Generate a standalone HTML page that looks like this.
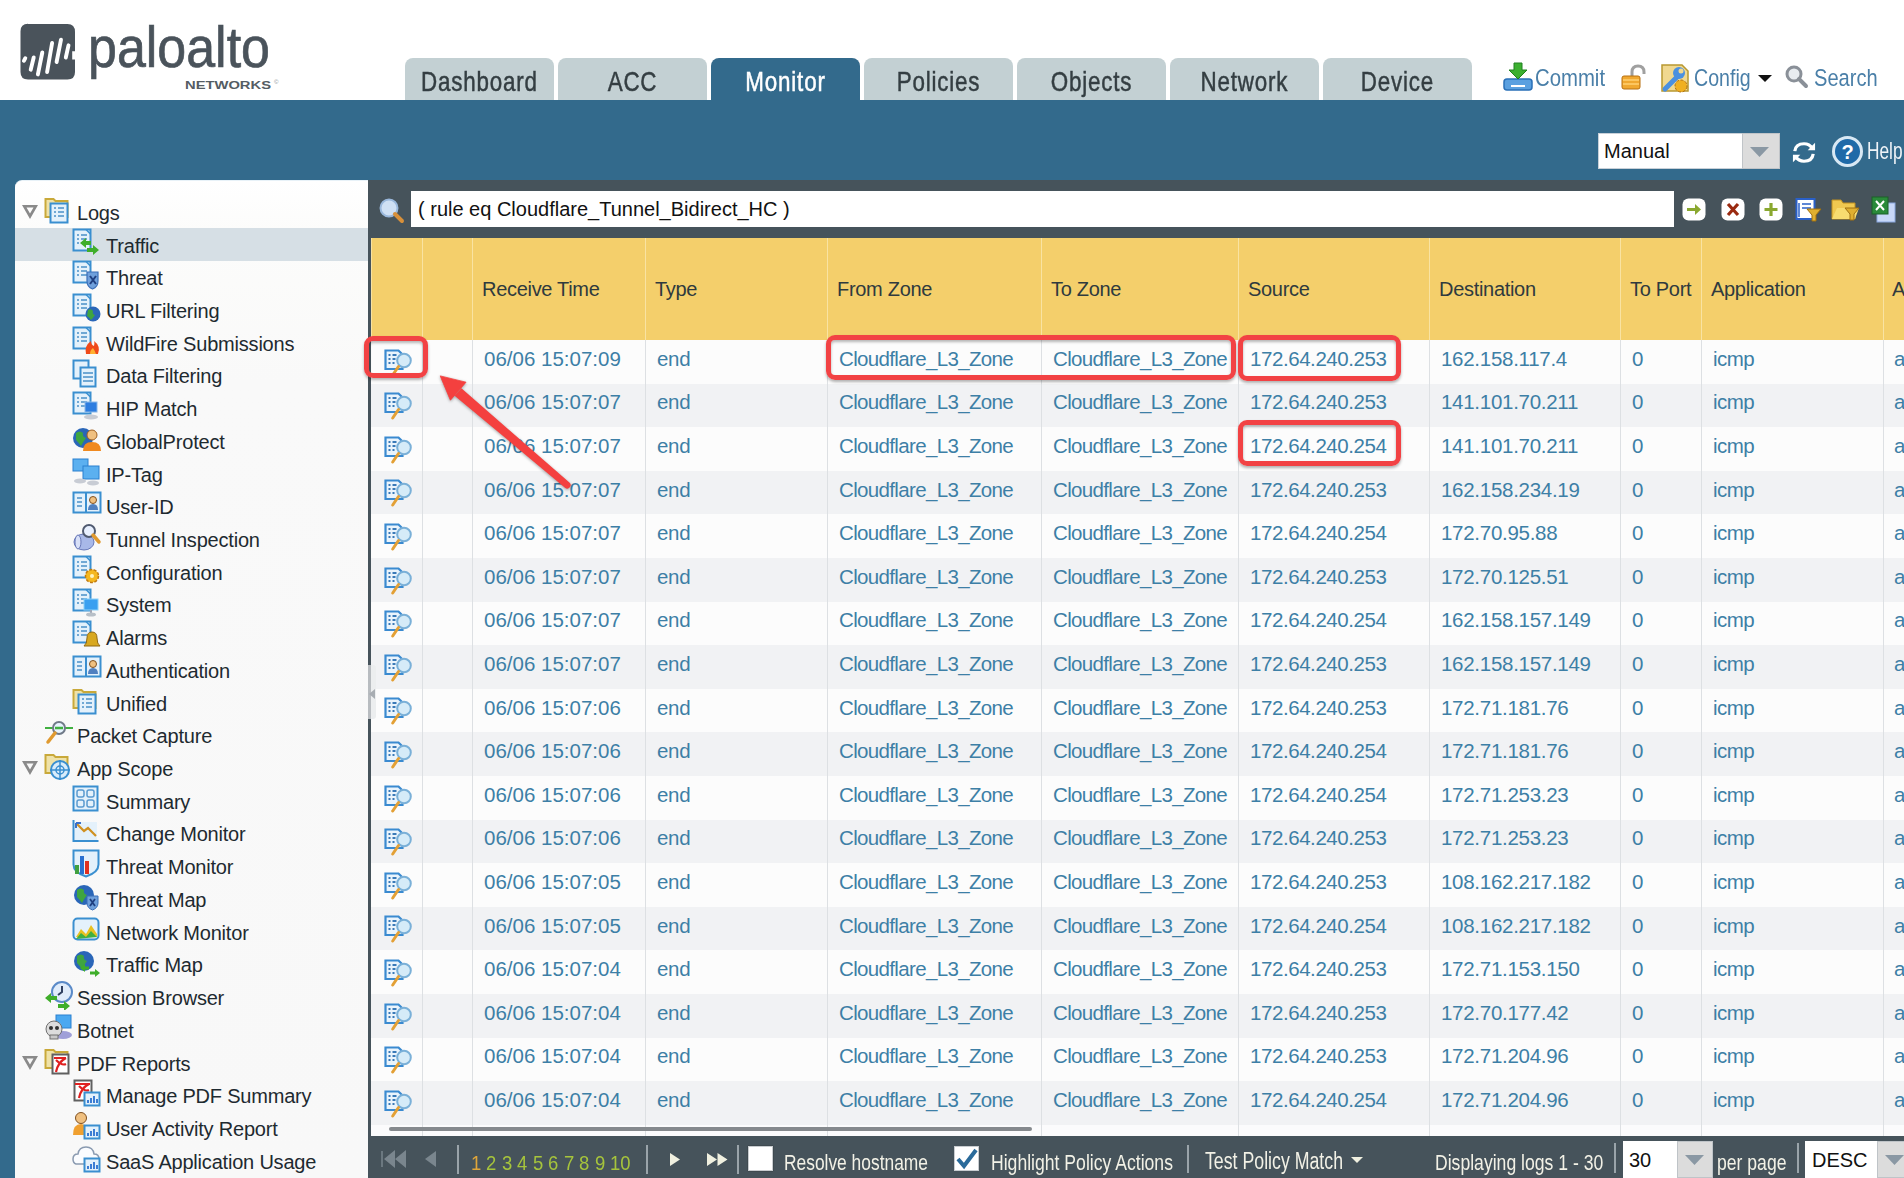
<!DOCTYPE html><html><head><meta charset="utf-8"><style>
*{margin:0;padding:0;box-sizing:border-box}
html,body{width:1904px;height:1178px;overflow:hidden;background:#fff;font-family:"Liberation Sans",sans-serif}
.abs{position:absolute}
.tab{position:absolute;top:58px;height:42px;width:149px;background:#c3d0d3;border-radius:8px 8px 0 0;}
.tab span{position:absolute;left:0;right:0;top:7.5px;text-align:center;font-size:28px;color:#343e42;transform:scaleX(0.8);letter-spacing:1px;white-space:nowrap;line-height:32px;-webkit-text-stroke:0.5px #343e42}
.tab.on span{-webkit-text-stroke:0.5px #fff}
.tab.on{background:#336a8c}
.tab.on span{color:#fff}
.cond{display:inline-block;transform-origin:0 50%;white-space:nowrap}
.tree{position:absolute;left:0;height:33px;width:353px}
.tree .t{position:absolute;top:0.8px;font-size:20px;line-height:33px;color:#1e2a30;white-space:nowrap;letter-spacing:-0.2px}
.tree svg{position:absolute;top:-1px}
.row{position:absolute;left:371px;width:1533px;height:44px}
.cell{position:absolute;font-size:20.5px;color:#3d7fa6;white-space:nowrap;letter-spacing:-0.35px}
.hd{position:absolute;top:278px;font-size:20px;color:#2f3a3e;white-space:nowrap;letter-spacing:-0.3px}
.sep{position:absolute;width:1px}
.redbox{position:absolute;border:5.5px solid #f24244;border-radius:9px;box-shadow:0 2px 3px rgba(0,0,0,.3), inset 0 2px 3px rgba(0,0,0,.28)}
.ft{position:absolute;color:#f2f1e6;font-size:22px;white-space:nowrap;transform-origin:0 0;line-height:26px;margin-top:2px}
</style></head><body>

<div class="abs" style="left:0;top:0;width:1904px;height:100px;background:#fff"></div>
<svg class="abs" style="left:18px;top:20px" width="270" height="75" viewBox="0 0 270 75">
<path d="M10 4 h39.5 q7.5 0 7.5 8 v19.3 h-2.8 v8.3 h2.8 v12.4 q0 7.5 -7.5 7.5 h-39.5 q-7.5 0 -7.5-7.5 v-40.7 q0-7.5 7.5-7.5z" fill="#4a535b"/>
<g stroke="#fff" stroke-linecap="round" fill="none" stroke-width="3.9">
<path d="M5.9 40.8 l1.4 -2.6"/>
<path d="M12.7 49.7 l3 -12.2"/>
<path d="M19.9 54.4 l4.4 -21.9"/>
<path d="M29.1 52 l5 -29"/>
<path d="M38.6 42 l4.4 -22.3"/>
<path d="M47.8 37.5 l2.7 -12.2"/>
</g>
<text x="70" y="47.2" font-family="Liberation Sans" font-size="58" fill="#4a535b" stroke="#4a535b" stroke-width="0.7" textLength="182" lengthAdjust="spacingAndGlyphs">paloalto</text>
<text x="167" y="68.5" font-family="Liberation Sans" font-weight="bold" font-size="11.5" fill="#545c63" textLength="86" lengthAdjust="spacingAndGlyphs">NETWORKS</text>
<text x="256" y="64" font-family="Liberation Sans" font-size="6" fill="#8a9096">&#169;</text>
</svg>
<div class="tab" style="left:405px"><span>Dashboard</span></div>
<div class="tab" style="left:558px"><span>ACC</span></div>
<div class="tab on" style="left:711px"><span>Monitor</span></div>
<div class="tab" style="left:864px"><span>Policies</span></div>
<div class="tab" style="left:1017px"><span>Objects</span></div>
<div class="tab" style="left:1170px"><span>Network</span></div>
<div class="tab" style="left:1323px"><span>Device</span></div>
<svg class="abs" style="left:1503px;top:62px" width="30" height="30" viewBox="0 0 30 30">
<path d="M4 17 h22 q3 0 3 3 v5 q0 3 -3 3 h-22 q-3 0 -3-3 v-5 q0-3 3-3z" fill="#5aa0e0" stroke="#2a70b8" stroke-width="1.5"/>
<path d="M8 24 h14" stroke="#fff" stroke-width="2"/>
<path d="M11 1 h8 v7 h5 l-9 9 l-9-9 h5z" fill="#3cb030" stroke="#208020"/>
</svg>
<div class="abs" style="left:1535px;top:64px;font-size:24.5px;color:#4a7fa8;line-height:28px"><span class="cond" style="transform:scaleX(0.83)">Commit</span></div>
<svg class="abs" style="left:1620px;top:64px" width="28" height="28" viewBox="0 0 28 28">
<path d="M12 12 v-4 q0-6 6-6 q6 0 6 6 v2" fill="none" stroke="#a0a0a0" stroke-width="3"/>
<rect x="2" y="12" width="18" height="13" rx="2" fill="#f0a830" stroke="#b87010"/>
<path d="M3 16 h16 M3 20 h16" stroke="#ffd070" stroke-width="1.5"/>
</svg>
<svg class="abs" style="left:1659px;top:63px" width="32" height="30" viewBox="0 0 32 30">
<path d="M3 2 h20 l6 6 v20 h-26z" fill="#f0d890" stroke="#b89830" stroke-width="1.5"/>
<path d="M6 26 l12-12" stroke="#4a90e0" stroke-width="5" stroke-linecap="round"/>
<circle cx="20" cy="10" r="6" fill="#4a90e0"/><circle cx="22" cy="8" r="2.5" fill="#f0d890"/>
<circle cx="22" cy="23" r="6" fill="#f0b020" stroke="#b07010" stroke-dasharray="3 1.5"/>
</svg>
<div class="abs" style="left:1694px;top:64px;font-size:24.5px;color:#4a7fa8;line-height:28px"><span class="cond" style="transform:scaleX(0.8)">Config</span></div>
<svg class="abs" style="left:1758px;top:75px" width="15" height="8"><path d="M0 0 h14 l-7 7z" fill="#111"/></svg>
<svg class="abs" style="left:1785px;top:65px" width="24" height="24" viewBox="0 0 24 24">
<circle cx="9" cy="9" r="7" fill="#e8ecf0" stroke="#8a9098" stroke-width="3"/>
<path d="M14 14 l7 7" stroke="#8a9098" stroke-width="4" stroke-linecap="round"/>
</svg>
<div class="abs" style="left:1814px;top:64px;font-size:24.5px;color:#4a7fa8;line-height:28px"><span class="cond" style="transform:scaleX(0.82)">Search</span></div>
<div class="abs" style="left:0;top:100px;width:1904px;height:1078px;background:#336a8c"></div>
<div class="abs" style="left:1598px;top:133px;width:145px;height:36px;background:#fff;border:1px solid #c8d0d8"></div>
<div class="abs" style="left:1604px;top:137px;font-size:20px;line-height:28px;color:#111">Manual</div>
<div class="abs" style="left:1742px;top:133px;width:38px;height:36px;background:#dcdcdc;border:1px solid #c0c4c8"></div>
<svg class="abs" style="left:1750px;top:147px" width="20" height="11"><path d="M0 0 h19 l-9.5 10z" fill="#8a98a4"/></svg>
<svg class="abs" style="left:1791px;top:141px" width="26" height="23" viewBox="0 0 28 25">
<path d="M4 11 q1-8 10-8 q6 0 9 5" fill="none" stroke="#fff" stroke-width="3.5"/>
<path d="M26 2 v8 h-8z" fill="#fff"/>
<path d="M24 14 q-1 8 -10 8 q-6 0 -9-5" fill="none" stroke="#fff" stroke-width="3.5"/>
<path d="M2 23 v-8 h8z" fill="#fff"/>
</svg>
<svg class="abs" style="left:1831px;top:135px" width="34" height="33" viewBox="0 0 34 33">
<circle cx="16.5" cy="16.5" r="14" fill="#1f6aa8" stroke="#d8e8f4" stroke-width="3"/>
<text x="16.5" y="24" text-anchor="middle" font-family="Liberation Sans" font-weight="bold" font-size="20" fill="#fff">?</text>
</svg>
<div class="abs" style="left:1867px;top:137px;font-size:24px;line-height:28px;color:#f0f4f8"><span class="cond" style="transform:scaleX(0.72)">Help</span></div>
<div class="abs" style="left:15px;top:180px;width:353px;height:998px;background:linear-gradient(#ffffff 0px,#fcfcfb 50px,#f9f9f9 200px,#f8f8f8 100%);border-radius:7px 0 0 0;border-top:1px solid #e8f2f8"></div>
<div class="abs" style="left:15px;top:228px;width:353px;height:33px;background:#d6dfe5"></div>
<div class="tree" style="top:196.00px">
<svg class="abs" style="left:22px;top:9px" width="17" height="15"><path d="M0 0 h16 l-8 14z M4.5 2.5 h7 l-3.5 6z" fill="#8a8a8a" fill-rule="evenodd"/></svg>
<div style="position:absolute;left:44px;top:0"><svg width="30" height="30" viewBox="0 0 30 30"><path d="M1.5 4 h8 l2 2 h12 v16 h-22z" fill="#efe2a8" stroke="#c9a93a" stroke-width="2"/><rect x="6.5" y="8.5" width="17" height="19" fill="#e4f1fb" stroke="#3a8fd0" stroke-width="2"/><path d="M10 13h2M14 13h6M10 17h2M14 17h6M10 21h2M14 21h6" stroke="#4a90c8" stroke-width="1.6"/></svg></div>
<div class="t" style="left:77px">Logs</div>
</div>
<div class="tree" style="top:228.72px">
<div style="position:absolute;left:72px;top:0"><svg width="30" height="30" viewBox="0 0 30 30"><rect x="1.5" y="1.5" width="17" height="21" fill="#e4f1fb" stroke="#3a8fd0" stroke-width="2"/><path d="M14 1.5 L18.5 6" stroke="#3a8fd0" stroke-width="1.5"/><path d="M5 7h2M9 7h6M5 11h2M9 11h6M5 15h2M9 15h6" stroke="#4a90c8" stroke-width="1.6"/><path d="M8 15 l6-5 v3 h5 v4 h-5 v3z" fill="#3fae2a"/><path d="M27 22 l-6-5 v3 h-6 v4 h6 v3z" fill="#3fae2a"/></svg></div>
<div class="t" style="left:106px">Traffic</div>
</div>
<div class="tree" style="top:261.44px">
<div style="position:absolute;left:72px;top:0"><svg width="30" height="30" viewBox="0 0 30 30"><rect x="1.5" y="1.5" width="17" height="21" fill="#e4f1fb" stroke="#3a8fd0" stroke-width="2"/><path d="M14 1.5 L18.5 6" stroke="#3a8fd0" stroke-width="1.5"/><path d="M5 7h2M9 7h6M5 11h2M9 11h6M5 15h2M9 15h6" stroke="#4a90c8" stroke-width="1.6"/><path d="M15 12 h11 v9 q0 6 -5.5 8 q-5.5-2 -5.5-8z" fill="#6fa0dc" stroke="#3b6fb8" stroke-width="1.2"/><path d="M18 16 l6 8 M24 16 l-6 8" stroke="#1f3f80" stroke-width="2"/></svg></div>
<div class="t" style="left:106px">Threat</div>
</div>
<div class="tree" style="top:294.16px">
<div style="position:absolute;left:72px;top:0"><svg width="30" height="30" viewBox="0 0 30 30"><rect x="1.5" y="1.5" width="17" height="21" fill="#e4f1fb" stroke="#3a8fd0" stroke-width="2"/><path d="M14 1.5 L18.5 6" stroke="#3a8fd0" stroke-width="1.5"/><path d="M5 7h2M9 7h6M5 11h2M9 11h6M5 15h2M9 15h6" stroke="#4a90c8" stroke-width="1.6"/><circle cx="21" cy="21" r="7.5" fill="#2a66b8"/><path d="M16 17 q3 -2 5 1 q-1 3 2 4 q-2 3 -4 5 q-2-3-4-4z" fill="#3fa540"/></svg></div>
<div class="t" style="left:106px">URL Filtering</div>
</div>
<div class="tree" style="top:326.88px">
<div style="position:absolute;left:72px;top:0"><svg width="30" height="30" viewBox="0 0 30 30"><rect x="1.5" y="1.5" width="17" height="21" fill="#e4f1fb" stroke="#3a8fd0" stroke-width="2"/><path d="M14 1.5 L18.5 6" stroke="#3a8fd0" stroke-width="1.5"/><path d="M5 7h2M9 7h6M5 11h2M9 11h6M5 15h2M9 15h6" stroke="#4a90c8" stroke-width="1.6"/><path d="M14 28 q-2-8 5-13 q0 4 3 5 q1-3 0-5 q7 5 4 13z" fill="#f04a1a"/><path d="M18 28 q0-4 3-6 q2 3 3 6z" fill="#ffb030"/></svg></div>
<div class="t" style="left:106px">WildFire Submissions</div>
</div>
<div class="tree" style="top:359.60px">
<div style="position:absolute;left:72px;top:0"><svg width="30" height="30" viewBox="0 0 30 30"><rect x="1.5" y="1.5" width="15" height="18" fill="#e4f1fb" stroke="#3a8fd0" stroke-width="2"/><rect x="8.5" y="8.5" width="15" height="19" fill="#e4f1fb" stroke="#3a8fd0" stroke-width="2"/><path d="M11 14h10M11 18h10M11 22h10" stroke="#4a90c8" stroke-width="1.6"/></svg></div>
<div class="t" style="left:106px">Data Filtering</div>
</div>
<div class="tree" style="top:392.32px">
<div style="position:absolute;left:72px;top:0"><svg width="30" height="30" viewBox="0 0 30 30"><rect x="1.5" y="1.5" width="17" height="21" fill="#e4f1fb" stroke="#3a8fd0" stroke-width="2"/><path d="M14 1.5 L18.5 6" stroke="#3a8fd0" stroke-width="1.5"/><path d="M5 7h2M9 7h6M5 11h2M9 11h6M5 15h2M9 15h6" stroke="#4a90c8" stroke-width="1.6"/><rect x="13" y="11" width="12" height="10" fill="#2d7de0" stroke="#8ab8e8"/><ellipse cx="19" cy="26" rx="7" ry="2.5" fill="#c8ccd4"/></svg></div>
<div class="t" style="left:106px">HIP Match</div>
</div>
<div class="tree" style="top:425.04px">
<div style="position:absolute;left:72px;top:0"><svg width="30" height="30" viewBox="0 0 30 30"><circle cx="11" cy="14" r="10" fill="#2a66b8"/><path d="M4 9 q4-3 7 0 q-1 4 3 5 q-3 4-5 8 q-3-4-5-6z" fill="#3fa540"/><circle cx="20" cy="11" r="5" fill="#f0c080" stroke="#a06020"/><path d="M11 27 q0-9 9-9 q9 0 9 9z" fill="#f08a20"/></svg></div>
<div class="t" style="left:106px">GlobalProtect</div>
</div>
<div class="tree" style="top:457.76px">
<div style="position:absolute;left:72px;top:0"><svg width="30" height="30" viewBox="0 0 30 30"><rect x="1" y="2" width="15" height="12" fill="#5bb0f0" stroke="#2a80d0"/><rect x="11" y="9" width="16" height="13" fill="#5bb0f0" stroke="#2a80d0"/><ellipse cx="8" cy="24" rx="6" ry="2.5" fill="#c8ccd4"/><ellipse cx="21" cy="26" rx="6" ry="2.5" fill="#c8ccd4"/></svg></div>
<div class="t" style="left:106px">IP-Tag</div>
</div>
<div class="tree" style="top:490.48px">
<div style="position:absolute;left:72px;top:0"><svg width="30" height="30" viewBox="0 0 30 30"><rect x="1.5" y="3.5" width="27" height="20" fill="#e4f1fb" stroke="#3a8fd0" stroke-width="2"/><path d="M14 3.5 v20" stroke="#3a8fd0" stroke-width="2"/><path d="M5 9h5M5 13h5M5 17h5" stroke="#4a90c8" stroke-width="1.5"/><circle cx="21" cy="11" r="3.5" fill="#f0c080" stroke="#805020"/><path d="M16 21 q0-6 5-6 q5 0 5 6z" fill="#5080c0"/></svg></div>
<div class="t" style="left:106px">User-ID</div>
</div>
<div class="tree" style="top:523.20px">
<div style="position:absolute;left:72px;top:0"><svg width="30" height="30" viewBox="0 0 30 30"><ellipse cx="12" cy="20" rx="10" ry="8" fill="#a8b8e8" stroke="#6878b8"/><ellipse cx="6" cy="20" rx="3" ry="7" fill="#d8e0f8" stroke="#6878b8"/><circle cx="17" cy="9" r="6" fill="#e8f0ff" stroke="#505a70" stroke-width="2"/><path d="M21 13 l6 7" stroke="#e09a30" stroke-width="3.5" stroke-linecap="round"/></svg></div>
<div class="t" style="left:106px">Tunnel Inspection</div>
</div>
<div class="tree" style="top:555.92px">
<div style="position:absolute;left:72px;top:0"><svg width="30" height="30" viewBox="0 0 30 30"><rect x="1.5" y="1.5" width="17" height="21" fill="#e4f1fb" stroke="#3a8fd0" stroke-width="2"/><path d="M14 1.5 L18.5 6" stroke="#3a8fd0" stroke-width="1.5"/><path d="M5 7h2M9 7h6M5 11h2M9 11h6M5 15h2M9 15h6" stroke="#4a90c8" stroke-width="1.6"/><circle cx="20" cy="21" r="6.5" fill="#f5b820" stroke="#c07a10" stroke-width="1.5" stroke-dasharray="3 1.5"/><circle cx="20" cy="21" r="2" fill="#fff4c0"/></svg></div>
<div class="t" style="left:106px">Configuration</div>
</div>
<div class="tree" style="top:588.64px">
<div style="position:absolute;left:72px;top:0"><svg width="30" height="30" viewBox="0 0 30 30"><rect x="1.5" y="1.5" width="17" height="21" fill="#e4f1fb" stroke="#3a8fd0" stroke-width="2"/><path d="M14 1.5 L18.5 6" stroke="#3a8fd0" stroke-width="1.5"/><path d="M5 7h2M9 7h6M5 11h2M9 11h6M5 15h2M9 15h6" stroke="#4a90c8" stroke-width="1.6"/><rect x="12" y="11" width="14" height="11" fill="#3aa0f0" stroke="#8ad0f8"/><path d="M19 22 v3" stroke="#a0a8b8" stroke-width="2"/><ellipse cx="19" cy="26.5" rx="5" ry="2" fill="#b8c0c8"/></svg></div>
<div class="t" style="left:106px">System</div>
</div>
<div class="tree" style="top:621.36px">
<div style="position:absolute;left:72px;top:0"><svg width="30" height="30" viewBox="0 0 30 30"><rect x="1.5" y="1.5" width="17" height="21" fill="#e4f1fb" stroke="#3a8fd0" stroke-width="2"/><path d="M14 1.5 L18.5 6" stroke="#3a8fd0" stroke-width="1.5"/><path d="M5 7h2M9 7h6M5 11h2M9 11h6M5 15h2M9 15h6" stroke="#4a90c8" stroke-width="1.6"/><path d="M12 26 q3-2 3-8 q0-6 5-6 q5 0 5 6 q0 6 3 8z" fill="#d8a820" stroke="#906810"/></svg></div>
<div class="t" style="left:106px">Alarms</div>
</div>
<div class="tree" style="top:654.08px">
<div style="position:absolute;left:72px;top:0"><svg width="30" height="30" viewBox="0 0 30 30"><rect x="1.5" y="3.5" width="27" height="20" fill="#e4f1fb" stroke="#3a8fd0" stroke-width="2"/><path d="M14 3.5 v20" stroke="#3a8fd0" stroke-width="2"/><path d="M5 9h5M5 13h5M5 17h5" stroke="#4a90c8" stroke-width="1.5"/><circle cx="21" cy="11" r="3.5" fill="#f0c080" stroke="#805020"/><path d="M16 21 q0-6 5-6 q5 0 5 6z" fill="#5080c0"/></svg></div>
<div class="t" style="left:106px">Authentication</div>
</div>
<div class="tree" style="top:686.80px">
<div style="position:absolute;left:72px;top:0"><svg width="30" height="30" viewBox="0 0 30 30"><path d="M1.5 4 h8 l2 2 h12 v16 h-22z" fill="#efe2a8" stroke="#c9a93a" stroke-width="2"/><rect x="6.5" y="8.5" width="17" height="19" fill="#e4f1fb" stroke="#3a8fd0" stroke-width="2"/><path d="M10 13h2M14 13h6M10 17h2M14 17h6M10 21h2M14 21h6" stroke="#4a90c8" stroke-width="1.6"/></svg></div>
<div class="t" style="left:106px">Unified</div>
</div>
<div class="tree" style="top:719.52px">
<div style="position:absolute;left:44px;top:0"><svg width="30" height="30" viewBox="0 0 30 30"><path d="M1 9 h28" stroke="#40b040" stroke-width="2"/><circle cx="15" cy="9" r="6" fill="#e8f4ff" stroke="#707a88" stroke-width="2"/><path d="M15 9h-4M15 9h4" stroke="#40b040" stroke-width="2.5"/><path d="M11 14 l-7 9" stroke="#e09a30" stroke-width="3.5" stroke-linecap="round"/></svg></div>
<div class="t" style="left:77px">Packet Capture</div>
</div>
<div class="tree" style="top:752.24px">
<svg class="abs" style="left:22px;top:9px" width="17" height="15"><path d="M0 0 h16 l-8 14z M4.5 2.5 h7 l-3.5 6z" fill="#8a8a8a" fill-rule="evenodd"/></svg>
<div style="position:absolute;left:44px;top:0"><svg width="30" height="30" viewBox="0 0 30 30"><path d="M1.5 4 h8 l2 2 h12 v16 h-22z" fill="#efe2a8" stroke="#c9a93a" stroke-width="2"/><circle cx="16" cy="19" r="9" fill="#d8ecfb" stroke="#3a8fd0" stroke-width="2"/><path d="M16 9v20M6 19h20" stroke="#3a8fd0" stroke-width="1.5"/><circle cx="16" cy="19" r="4" fill="none" stroke="#3a8fd0" stroke-width="1.5"/></svg></div>
<div class="t" style="left:77px">App Scope</div>
</div>
<div class="tree" style="top:784.96px">
<div style="position:absolute;left:72px;top:0"><svg width="30" height="30" viewBox="0 0 30 30"><rect x="1.5" y="2.5" width="24" height="24" fill="#e4f1fb" stroke="#3a8fd0" stroke-width="2"/><rect x="5" y="6" width="7" height="7" rx="2" fill="none" stroke="#5a9ad0" stroke-width="1.5"/><rect x="15" y="6" width="7" height="7" rx="2" fill="none" stroke="#5a9ad0" stroke-width="1.5"/><rect x="5" y="16" width="7" height="7" rx="2" fill="none" stroke="#5a9ad0" stroke-width="1.5"/><rect x="15" y="16" width="7" height="7" rx="2" fill="none" stroke="#5a9ad0" stroke-width="1.5"/></svg></div>
<div class="t" style="left:106px">Summary</div>
</div>
<div class="tree" style="top:817.68px">
<div style="position:absolute;left:72px;top:0"><svg width="30" height="30" viewBox="0 0 30 30"><path d="M1.5 3 v21 h25" fill="none" stroke="#3a8fd0" stroke-width="2"/><rect x="3" y="5" width="22" height="18" fill="#e4f1fb"/><path d="M4 6 l8 8 l4-3 l8 8" fill="none" stroke="#d09020" stroke-width="2.2"/><path d="M4 6 h5 M4 6 v5" stroke="#3a70c8" stroke-width="2"/></svg></div>
<div class="t" style="left:106px">Change Monitor</div>
</div>
<div class="tree" style="top:850.40px">
<div style="position:absolute;left:72px;top:0"><svg width="30" height="30" viewBox="0 0 30 30"><path d="M1.5 1.5 h25 v14 q0 8 -12.5 12 q-12.5-4 -12.5-12z" fill="#e4f1fb" stroke="#3a8fd0" stroke-width="2"/><rect x="3" y="16" width="4" height="9" fill="#40a040"/><rect x="8" y="7" width="4" height="18" fill="#2a70d0"/><rect x="13" y="12" width="4" height="13" fill="#e03020"/></svg></div>
<div class="t" style="left:106px">Threat Monitor</div>
</div>
<div class="tree" style="top:883.12px">
<div style="position:absolute;left:72px;top:0"><svg width="30" height="30" viewBox="0 0 30 30"><circle cx="12" cy="13" r="10" fill="#2a66b8"/><path d="M5 8 q4-3 7 0 q-1 4 3 5 q-3 4-5 8 q-3-4-5-6z" fill="#3fa540"/><path d="M15 14 h11 v7 q0 5 -5.5 7 q-5.5-2 -5.5-7z" fill="#6fa0dc" stroke="#3b6fb8"/><path d="M18 17 l5 7 M23 17 l-5 7" stroke="#1f3f80" stroke-width="1.8"/></svg></div>
<div class="t" style="left:106px">Threat Map</div>
</div>
<div class="tree" style="top:915.84px">
<div style="position:absolute;left:72px;top:0"><svg width="30" height="30" viewBox="0 0 30 30"><rect x="1.5" y="3.5" width="25" height="21" rx="4" fill="#e4f1fb" stroke="#3a8fd0" stroke-width="2"/><path d="M4 22 l5-8 l5 5 l5-9 l6 9 v3z" fill="#e8c020"/><path d="M4 24 l5-6 l5 4 l5-6 l6 6z" fill="#40b040"/></svg></div>
<div class="t" style="left:106px">Network Monitor</div>
</div>
<div class="tree" style="top:948.56px">
<div style="position:absolute;left:72px;top:0"><svg width="30" height="30" viewBox="0 0 30 30"><circle cx="12" cy="13" r="10" fill="#2a66b8"/><path d="M5 8 q4-3 7 0 q-1 4 3 5 q-3 4-5 8 q-3-4-5-6z" fill="#3fa540"/><path d="M8 20 l5-4 v2.5 h4 v3 h-4 v2.5z" fill="#3fae2a"/><path d="M28 25 l-5-4 v2.5 h-5 v3 h5 v2.5z" fill="#3fae2a"/></svg></div>
<div class="t" style="left:106px">Traffic Map</div>
</div>
<div class="tree" style="top:981.28px">
<div style="position:absolute;left:44px;top:0"><svg width="30" height="30" viewBox="0 0 30 30"><circle cx="18" cy="12" r="10" fill="#e0ecfa" stroke="#5a8ac8" stroke-width="2"/><path d="M18 6 v6 l-4 3" stroke="#304060" stroke-width="2" fill="none"/><path d="M1 18 l6-5 v3 h6 v4 h-6 v3z" fill="#3fae2a"/><path d="M26 26 l-6-5 v3 h-6 v4 h6 v3z" fill="#3fae2a"/></svg></div>
<div class="t" style="left:77px">Session Browser</div>
</div>
<div class="tree" style="top:1014.00px">
<div style="position:absolute;left:44px;top:0"><svg width="30" height="30" viewBox="0 0 30 30"><rect x="12" y="2" width="15" height="13" fill="#4aa8f0" stroke="#2a80d0"/><ellipse cx="19" cy="22" rx="9" ry="4" fill="#a0a0d8"/><circle cx="10" cy="16" r="8" fill="#dcdcdc" stroke="#707070"/><circle cx="7" cy="15" r="2" fill="#303030"/><circle cx="13" cy="15" r="2" fill="#303030"/><rect x="6" y="22" width="8" height="4" fill="#c8c8c8" stroke="#707070"/></svg></div>
<div class="t" style="left:77px">Botnet</div>
</div>
<div class="tree" style="top:1046.72px">
<svg class="abs" style="left:22px;top:9px" width="17" height="15"><path d="M0 0 h16 l-8 14z M4.5 2.5 h7 l-3.5 6z" fill="#8a8a8a" fill-rule="evenodd"/></svg>
<div style="position:absolute;left:44px;top:0"><svg width="30" height="30" viewBox="0 0 30 30"><path d="M1.5 4 h8 l2 2 h12 v16 h-22z" fill="#efe2a8" stroke="#c9a93a" stroke-width="2"/><rect x="8.5" y="8.5" width="16" height="19" fill="#fff" stroke="#606060" stroke-width="2"/><path d="M10 12 h12 M22 12 q-8 4 -10 14 M12 14 q6 6 10 4" stroke="#e02020" stroke-width="2.2" fill="none"/></svg></div>
<div class="t" style="left:77px">PDF Reports</div>
</div>
<div class="tree" style="top:1079.44px">
<div style="position:absolute;left:72px;top:0"><svg width="30" height="30" viewBox="0 0 30 30"><rect x="2.5" y="2.5" width="17" height="20" fill="#fff" stroke="#606060" stroke-width="2"/><path d="M3 6 h15 M17 6 q-8 4 -10 14 M7 8 q6 6 10 4" stroke="#e02020" stroke-width="2.2" fill="none"/><rect x="12.5" y="14.5" width="15" height="13" fill="#e4f1fb" stroke="#3a8fd0" stroke-width="2"/><path d="M16 25v-3M19 25v-5M22 25v-7M25 25v-4" stroke="#2a70d0" stroke-width="1.8"/></svg></div>
<div class="t" style="left:106px">Manage PDF Summary</div>
</div>
<div class="tree" style="top:1112.16px">
<div style="position:absolute;left:72px;top:0"><svg width="30" height="30" viewBox="0 0 30 30"><circle cx="9" cy="7" r="5.5" fill="#f0c080" stroke="#805020"/><path d="M1 24 q0-11 8-11 q8 0 8 11z" fill="#f0a030"/><rect x="12.5" y="14.5" width="15" height="13" fill="#e4f1fb" stroke="#3a8fd0" stroke-width="2"/><path d="M16 25v-3M19 25v-5M22 25v-7M25 25v-4" stroke="#2a70d0" stroke-width="1.8"/></svg></div>
<div class="t" style="left:106px">User Activity Report</div>
</div>
<div class="tree" style="top:1144.88px">
<div style="position:absolute;left:72px;top:0"><svg width="30" height="30" viewBox="0 0 30 30"><path d="M4 20 q-3-1 -3-5 q0-5 5-5 q1-7 8-7 q7 0 8 7 q5 0 5 5 q0 4 -4 5z" fill="#fafcff" stroke="#8a9ab0" stroke-width="1.5"/><rect x="12.5" y="14.5" width="15" height="13" fill="#e4f1fb" stroke="#3a8fd0" stroke-width="2"/><path d="M16 25v-3M19 25v-5M22 25v-7M25 25v-4" stroke="#2a70d0" stroke-width="1.8"/></svg></div>
<div class="t" style="left:106px">SaaS Application Usage</div>
</div>
<div class="abs" style="left:368px;top:180px;width:1536px;height:58px;background:#46535b"></div>
<div class="abs" style="left:368px;top:180px;width:3px;height:998px;background:#46535b"></div>
<svg class="abs" style="left:378px;top:197px" width="28" height="28" viewBox="0 0 28 28">
<circle cx="11" cy="11" r="8.5" fill="#cfe0f4" stroke="#9ab8dc" stroke-width="2"/>
<path d="M17 17 l7 7" stroke="#d8903a" stroke-width="4" stroke-linecap="round"/>
</svg>
<div class="abs" style="left:411px;top:191px;width:1263px;height:36px;background:#fff"></div>
<div class="abs" style="left:418px;top:195px;font-size:20px;line-height:28px;color:#111;white-space:nowrap">( rule eq Cloudflare_Tunnel_Bidirect_HC )</div>
<svg class="abs" style="left:1682px;top:198px" width="24" height="23"><rect x="0.5" y="0.5" width="23" height="22" rx="6" fill="#fff"/><path d="M5 11.5 h11" stroke="#8aa830" stroke-width="3"/><path d="M13 6 l6 5.5 l-6 5.5z" fill="#8aa830"/></svg>
<svg class="abs" style="left:1721px;top:198px" width="24" height="23"><rect x="0.5" y="0.5" width="23" height="22" rx="6" fill="#fff"/><path d="M7 6 l10 11 M17 6 l-10 11" stroke="#9a2a10" stroke-width="3.2"/></svg>
<svg class="abs" style="left:1759px;top:198px" width="24" height="23"><rect x="0.5" y="0.5" width="23" height="22" rx="6" fill="#fff"/><path d="M12 5 v13 M5.5 11.5 h13" stroke="#8aa830" stroke-width="3.2"/></svg>
<svg class="abs" style="left:1795px;top:197px" width="28" height="26" viewBox="0 0 28 26"><rect x="1.5" y="2" width="18" height="20" fill="#fff" stroke="#2a60c8" stroke-width="2"/><path d="M4 6v14M7 7h9M7 11h9" stroke="#2a60c8" stroke-width="1.5"/><path d="M12 12 h14 l-5 6 v6 h-4 v-6z" fill="#e0b030" stroke="#a07010"/></svg>
<svg class="abs" style="left:1831px;top:196px" width="30" height="27" viewBox="0 0 30 27"><path d="M1 4 h9 l2 3 h12 v16 h-23z" fill="#f0c850" stroke="#c09020"/><path d="M1 23 l5-11 h22 l-4 11z" fill="#f8dc70"/><path d="M14 12 h14 l-5 6 v6 h-4 v-6z" fill="#e0b030" stroke="#a07010"/></svg>
<svg class="abs" style="left:1871px;top:196px" width="26" height="27" viewBox="0 0 26 27"><rect x="6" y="7" width="18" height="19" fill="#c8d8f8" stroke="#8aa8e0"/><rect x="1" y="1" width="16" height="17" fill="#2a8a3a" stroke="#1a6028"/><path d="M5 5 l8 9 M13 5 l-8 9" stroke="#fff" stroke-width="2"/></svg>
<div class="abs" style="left:371px;top:238px;width:1533px;height:102px;background:#f4cf6b"></div>
<div class="abs" style="left:371px;top:238px;width:1px;height:102px;background:#f9e2a0"></div>
<div class="sep" style="left:422px;top:238px;height:102px;background:#f9e3a2"></div>
<div class="sep" style="left:472px;top:238px;height:102px;background:#f9e3a2"></div>
<div class="sep" style="left:645px;top:238px;height:102px;background:#f9e3a2"></div>
<div class="sep" style="left:827px;top:238px;height:102px;background:#f9e3a2"></div>
<div class="sep" style="left:1041px;top:238px;height:102px;background:#f9e3a2"></div>
<div class="sep" style="left:1238px;top:238px;height:102px;background:#f9e3a2"></div>
<div class="sep" style="left:1429px;top:238px;height:102px;background:#f9e3a2"></div>
<div class="sep" style="left:1620px;top:238px;height:102px;background:#f9e3a2"></div>
<div class="sep" style="left:1701px;top:238px;height:102px;background:#f9e3a2"></div>
<div class="sep" style="left:1883px;top:238px;height:102px;background:#f9e3a2"></div>
<div class="hd" style="left:482px">Receive Time</div>
<div class="hd" style="left:655px">Type</div>
<div class="hd" style="left:837px">From Zone</div>
<div class="hd" style="left:1051px">To Zone</div>
<div class="hd" style="left:1248px">Source</div>
<div class="hd" style="left:1439px">Destination</div>
<div class="hd" style="left:1630px">To Port</div>
<div class="hd" style="left:1711px">Application</div>
<div class="hd" style="left:1892px">A</div>
<div class="row" style="top:340.0px;background:#fcfcfc"></div>
<div class="row" style="top:383.6px;background:#f1f2f4"></div>
<div class="row" style="top:427.2px;background:#fcfcfc"></div>
<div class="row" style="top:470.8px;background:#f1f2f4"></div>
<div class="row" style="top:514.4px;background:#fcfcfc"></div>
<div class="row" style="top:558.0px;background:#f1f2f4"></div>
<div class="row" style="top:601.6px;background:#fcfcfc"></div>
<div class="row" style="top:645.2px;background:#f1f2f4"></div>
<div class="row" style="top:688.8px;background:#fcfcfc"></div>
<div class="row" style="top:732.4px;background:#f1f2f4"></div>
<div class="row" style="top:776.0px;background:#fcfcfc"></div>
<div class="row" style="top:819.6px;background:#f1f2f4"></div>
<div class="row" style="top:863.2px;background:#fcfcfc"></div>
<div class="row" style="top:906.8px;background:#f1f2f4"></div>
<div class="row" style="top:950.4px;background:#fcfcfc"></div>
<div class="row" style="top:994.0px;background:#f1f2f4"></div>
<div class="row" style="top:1037.6px;background:#fcfcfc"></div>
<div class="row" style="top:1081.2px;background:#f1f2f4"></div>
<div class="row" style="top:1124.8px;height:12px;background:#fbfbfc"></div>
<div class="sep" style="left:422px;top:340px;height:796px;background:#dde0e3"></div>
<div class="sep" style="left:472px;top:340px;height:796px;background:#dde0e3"></div>
<div class="sep" style="left:645px;top:340px;height:796px;background:#dde0e3"></div>
<div class="sep" style="left:827px;top:340px;height:796px;background:#dde0e3"></div>
<div class="sep" style="left:1041px;top:340px;height:796px;background:#dde0e3"></div>
<div class="sep" style="left:1238px;top:340px;height:796px;background:#dde0e3"></div>
<div class="sep" style="left:1429px;top:340px;height:796px;background:#dde0e3"></div>
<div class="sep" style="left:1620px;top:340px;height:796px;background:#dde0e3"></div>
<div class="sep" style="left:1701px;top:340px;height:796px;background:#dde0e3"></div>
<div class="sep" style="left:1883px;top:340px;height:796px;background:#dde0e3"></div>
<div class="abs" style="left:384px;top:347.5px"><svg width="30" height="30" viewBox="0 0 30 30"><path d="M1.5 2.5 h13 l4 4 v14.5 h-17z" fill="#eaf4fc" stroke="#3a8ad0" stroke-width="2.2"/><path d="M4.5 7h2M4.5 11h2M4.5 15h2M8.5 7h4M8.5 11h3M8.5 15h2" stroke="#3a7ab8" stroke-width="1.8"/><circle cx="20" cy="12.5" r="6.8" fill="#d5ebf8" stroke="#7ab0d8" stroke-width="2"/><path d="M14.5 18.5 l-5.8 8.5" stroke="#e3a035" stroke-width="3" stroke-linecap="round"/></svg></div>
<div class="cell" style="left:484px;top:344.8px;line-height:28px;letter-spacing:0.0px">06/06 15:07:09</div>
<div class="cell" style="left:657px;top:344.8px;line-height:28px;letter-spacing:-0.3px">end</div>
<div class="cell" style="left:839px;top:344.8px;line-height:28px;letter-spacing:-0.65px">Cloudflare_L3_Zone</div>
<div class="cell" style="left:1053px;top:344.8px;line-height:28px;letter-spacing:-0.65px">Cloudflare_L3_Zone</div>
<div class="cell" style="left:1250px;top:344.8px;line-height:28px;letter-spacing:-0.43px">172.64.240.253</div>
<div class="cell" style="left:1441px;top:344.8px;line-height:28px;letter-spacing:-0.28px">162.158.117.4</div>
<div class="cell" style="left:1632px;top:344.8px;line-height:28px;letter-spacing:0px">0</div>
<div class="cell" style="left:1713px;top:344.8px;line-height:28px;letter-spacing:-0.57px">icmp</div>
<div class="cell" style="left:1894px;top:344.8px;line-height:28px;letter-spacing:0px">a</div>
<div class="abs" style="left:384px;top:391.1px"><svg width="30" height="30" viewBox="0 0 30 30"><path d="M1.5 2.5 h13 l4 4 v14.5 h-17z" fill="#eaf4fc" stroke="#3a8ad0" stroke-width="2.2"/><path d="M4.5 7h2M4.5 11h2M4.5 15h2M8.5 7h4M8.5 11h3M8.5 15h2" stroke="#3a7ab8" stroke-width="1.8"/><circle cx="20" cy="12.5" r="6.8" fill="#d5ebf8" stroke="#7ab0d8" stroke-width="2"/><path d="M14.5 18.5 l-5.8 8.5" stroke="#e3a035" stroke-width="3" stroke-linecap="round"/></svg></div>
<div class="cell" style="left:484px;top:388.4px;line-height:28px;letter-spacing:0.0px">06/06 15:07:07</div>
<div class="cell" style="left:657px;top:388.4px;line-height:28px;letter-spacing:-0.3px">end</div>
<div class="cell" style="left:839px;top:388.4px;line-height:28px;letter-spacing:-0.65px">Cloudflare_L3_Zone</div>
<div class="cell" style="left:1053px;top:388.4px;line-height:28px;letter-spacing:-0.65px">Cloudflare_L3_Zone</div>
<div class="cell" style="left:1250px;top:388.4px;line-height:28px;letter-spacing:-0.43px">172.64.240.253</div>
<div class="cell" style="left:1441px;top:388.4px;line-height:28px;letter-spacing:-0.28px">141.101.70.211</div>
<div class="cell" style="left:1632px;top:388.4px;line-height:28px;letter-spacing:0px">0</div>
<div class="cell" style="left:1713px;top:388.4px;line-height:28px;letter-spacing:-0.57px">icmp</div>
<div class="cell" style="left:1894px;top:388.4px;line-height:28px;letter-spacing:0px">a</div>
<div class="abs" style="left:384px;top:434.7px"><svg width="30" height="30" viewBox="0 0 30 30"><path d="M1.5 2.5 h13 l4 4 v14.5 h-17z" fill="#eaf4fc" stroke="#3a8ad0" stroke-width="2.2"/><path d="M4.5 7h2M4.5 11h2M4.5 15h2M8.5 7h4M8.5 11h3M8.5 15h2" stroke="#3a7ab8" stroke-width="1.8"/><circle cx="20" cy="12.5" r="6.8" fill="#d5ebf8" stroke="#7ab0d8" stroke-width="2"/><path d="M14.5 18.5 l-5.8 8.5" stroke="#e3a035" stroke-width="3" stroke-linecap="round"/></svg></div>
<div class="cell" style="left:484px;top:432.0px;line-height:28px;letter-spacing:0.0px">06/06 15:07:07</div>
<div class="cell" style="left:657px;top:432.0px;line-height:28px;letter-spacing:-0.3px">end</div>
<div class="cell" style="left:839px;top:432.0px;line-height:28px;letter-spacing:-0.65px">Cloudflare_L3_Zone</div>
<div class="cell" style="left:1053px;top:432.0px;line-height:28px;letter-spacing:-0.65px">Cloudflare_L3_Zone</div>
<div class="cell" style="left:1250px;top:432.0px;line-height:28px;letter-spacing:-0.43px">172.64.240.254</div>
<div class="cell" style="left:1441px;top:432.0px;line-height:28px;letter-spacing:-0.28px">141.101.70.211</div>
<div class="cell" style="left:1632px;top:432.0px;line-height:28px;letter-spacing:0px">0</div>
<div class="cell" style="left:1713px;top:432.0px;line-height:28px;letter-spacing:-0.57px">icmp</div>
<div class="cell" style="left:1894px;top:432.0px;line-height:28px;letter-spacing:0px">a</div>
<div class="abs" style="left:384px;top:478.3px"><svg width="30" height="30" viewBox="0 0 30 30"><path d="M1.5 2.5 h13 l4 4 v14.5 h-17z" fill="#eaf4fc" stroke="#3a8ad0" stroke-width="2.2"/><path d="M4.5 7h2M4.5 11h2M4.5 15h2M8.5 7h4M8.5 11h3M8.5 15h2" stroke="#3a7ab8" stroke-width="1.8"/><circle cx="20" cy="12.5" r="6.8" fill="#d5ebf8" stroke="#7ab0d8" stroke-width="2"/><path d="M14.5 18.5 l-5.8 8.5" stroke="#e3a035" stroke-width="3" stroke-linecap="round"/></svg></div>
<div class="cell" style="left:484px;top:475.6px;line-height:28px;letter-spacing:0.0px">06/06 15:07:07</div>
<div class="cell" style="left:657px;top:475.6px;line-height:28px;letter-spacing:-0.3px">end</div>
<div class="cell" style="left:839px;top:475.6px;line-height:28px;letter-spacing:-0.65px">Cloudflare_L3_Zone</div>
<div class="cell" style="left:1053px;top:475.6px;line-height:28px;letter-spacing:-0.65px">Cloudflare_L3_Zone</div>
<div class="cell" style="left:1250px;top:475.6px;line-height:28px;letter-spacing:-0.43px">172.64.240.253</div>
<div class="cell" style="left:1441px;top:475.6px;line-height:28px;letter-spacing:-0.28px">162.158.234.19</div>
<div class="cell" style="left:1632px;top:475.6px;line-height:28px;letter-spacing:0px">0</div>
<div class="cell" style="left:1713px;top:475.6px;line-height:28px;letter-spacing:-0.57px">icmp</div>
<div class="cell" style="left:1894px;top:475.6px;line-height:28px;letter-spacing:0px">a</div>
<div class="abs" style="left:384px;top:521.9px"><svg width="30" height="30" viewBox="0 0 30 30"><path d="M1.5 2.5 h13 l4 4 v14.5 h-17z" fill="#eaf4fc" stroke="#3a8ad0" stroke-width="2.2"/><path d="M4.5 7h2M4.5 11h2M4.5 15h2M8.5 7h4M8.5 11h3M8.5 15h2" stroke="#3a7ab8" stroke-width="1.8"/><circle cx="20" cy="12.5" r="6.8" fill="#d5ebf8" stroke="#7ab0d8" stroke-width="2"/><path d="M14.5 18.5 l-5.8 8.5" stroke="#e3a035" stroke-width="3" stroke-linecap="round"/></svg></div>
<div class="cell" style="left:484px;top:519.2px;line-height:28px;letter-spacing:0.0px">06/06 15:07:07</div>
<div class="cell" style="left:657px;top:519.2px;line-height:28px;letter-spacing:-0.3px">end</div>
<div class="cell" style="left:839px;top:519.2px;line-height:28px;letter-spacing:-0.65px">Cloudflare_L3_Zone</div>
<div class="cell" style="left:1053px;top:519.2px;line-height:28px;letter-spacing:-0.65px">Cloudflare_L3_Zone</div>
<div class="cell" style="left:1250px;top:519.2px;line-height:28px;letter-spacing:-0.43px">172.64.240.254</div>
<div class="cell" style="left:1441px;top:519.2px;line-height:28px;letter-spacing:-0.28px">172.70.95.88</div>
<div class="cell" style="left:1632px;top:519.2px;line-height:28px;letter-spacing:0px">0</div>
<div class="cell" style="left:1713px;top:519.2px;line-height:28px;letter-spacing:-0.57px">icmp</div>
<div class="cell" style="left:1894px;top:519.2px;line-height:28px;letter-spacing:0px">a</div>
<div class="abs" style="left:384px;top:565.5px"><svg width="30" height="30" viewBox="0 0 30 30"><path d="M1.5 2.5 h13 l4 4 v14.5 h-17z" fill="#eaf4fc" stroke="#3a8ad0" stroke-width="2.2"/><path d="M4.5 7h2M4.5 11h2M4.5 15h2M8.5 7h4M8.5 11h3M8.5 15h2" stroke="#3a7ab8" stroke-width="1.8"/><circle cx="20" cy="12.5" r="6.8" fill="#d5ebf8" stroke="#7ab0d8" stroke-width="2"/><path d="M14.5 18.5 l-5.8 8.5" stroke="#e3a035" stroke-width="3" stroke-linecap="round"/></svg></div>
<div class="cell" style="left:484px;top:562.8px;line-height:28px;letter-spacing:0.0px">06/06 15:07:07</div>
<div class="cell" style="left:657px;top:562.8px;line-height:28px;letter-spacing:-0.3px">end</div>
<div class="cell" style="left:839px;top:562.8px;line-height:28px;letter-spacing:-0.65px">Cloudflare_L3_Zone</div>
<div class="cell" style="left:1053px;top:562.8px;line-height:28px;letter-spacing:-0.65px">Cloudflare_L3_Zone</div>
<div class="cell" style="left:1250px;top:562.8px;line-height:28px;letter-spacing:-0.43px">172.64.240.253</div>
<div class="cell" style="left:1441px;top:562.8px;line-height:28px;letter-spacing:-0.28px">172.70.125.51</div>
<div class="cell" style="left:1632px;top:562.8px;line-height:28px;letter-spacing:0px">0</div>
<div class="cell" style="left:1713px;top:562.8px;line-height:28px;letter-spacing:-0.57px">icmp</div>
<div class="cell" style="left:1894px;top:562.8px;line-height:28px;letter-spacing:0px">a</div>
<div class="abs" style="left:384px;top:609.1px"><svg width="30" height="30" viewBox="0 0 30 30"><path d="M1.5 2.5 h13 l4 4 v14.5 h-17z" fill="#eaf4fc" stroke="#3a8ad0" stroke-width="2.2"/><path d="M4.5 7h2M4.5 11h2M4.5 15h2M8.5 7h4M8.5 11h3M8.5 15h2" stroke="#3a7ab8" stroke-width="1.8"/><circle cx="20" cy="12.5" r="6.8" fill="#d5ebf8" stroke="#7ab0d8" stroke-width="2"/><path d="M14.5 18.5 l-5.8 8.5" stroke="#e3a035" stroke-width="3" stroke-linecap="round"/></svg></div>
<div class="cell" style="left:484px;top:606.4px;line-height:28px;letter-spacing:0.0px">06/06 15:07:07</div>
<div class="cell" style="left:657px;top:606.4px;line-height:28px;letter-spacing:-0.3px">end</div>
<div class="cell" style="left:839px;top:606.4px;line-height:28px;letter-spacing:-0.65px">Cloudflare_L3_Zone</div>
<div class="cell" style="left:1053px;top:606.4px;line-height:28px;letter-spacing:-0.65px">Cloudflare_L3_Zone</div>
<div class="cell" style="left:1250px;top:606.4px;line-height:28px;letter-spacing:-0.43px">172.64.240.254</div>
<div class="cell" style="left:1441px;top:606.4px;line-height:28px;letter-spacing:-0.28px">162.158.157.149</div>
<div class="cell" style="left:1632px;top:606.4px;line-height:28px;letter-spacing:0px">0</div>
<div class="cell" style="left:1713px;top:606.4px;line-height:28px;letter-spacing:-0.57px">icmp</div>
<div class="cell" style="left:1894px;top:606.4px;line-height:28px;letter-spacing:0px">a</div>
<div class="abs" style="left:384px;top:652.7px"><svg width="30" height="30" viewBox="0 0 30 30"><path d="M1.5 2.5 h13 l4 4 v14.5 h-17z" fill="#eaf4fc" stroke="#3a8ad0" stroke-width="2.2"/><path d="M4.5 7h2M4.5 11h2M4.5 15h2M8.5 7h4M8.5 11h3M8.5 15h2" stroke="#3a7ab8" stroke-width="1.8"/><circle cx="20" cy="12.5" r="6.8" fill="#d5ebf8" stroke="#7ab0d8" stroke-width="2"/><path d="M14.5 18.5 l-5.8 8.5" stroke="#e3a035" stroke-width="3" stroke-linecap="round"/></svg></div>
<div class="cell" style="left:484px;top:650.0px;line-height:28px;letter-spacing:0.0px">06/06 15:07:07</div>
<div class="cell" style="left:657px;top:650.0px;line-height:28px;letter-spacing:-0.3px">end</div>
<div class="cell" style="left:839px;top:650.0px;line-height:28px;letter-spacing:-0.65px">Cloudflare_L3_Zone</div>
<div class="cell" style="left:1053px;top:650.0px;line-height:28px;letter-spacing:-0.65px">Cloudflare_L3_Zone</div>
<div class="cell" style="left:1250px;top:650.0px;line-height:28px;letter-spacing:-0.43px">172.64.240.253</div>
<div class="cell" style="left:1441px;top:650.0px;line-height:28px;letter-spacing:-0.28px">162.158.157.149</div>
<div class="cell" style="left:1632px;top:650.0px;line-height:28px;letter-spacing:0px">0</div>
<div class="cell" style="left:1713px;top:650.0px;line-height:28px;letter-spacing:-0.57px">icmp</div>
<div class="cell" style="left:1894px;top:650.0px;line-height:28px;letter-spacing:0px">a</div>
<div class="abs" style="left:384px;top:696.3px"><svg width="30" height="30" viewBox="0 0 30 30"><path d="M1.5 2.5 h13 l4 4 v14.5 h-17z" fill="#eaf4fc" stroke="#3a8ad0" stroke-width="2.2"/><path d="M4.5 7h2M4.5 11h2M4.5 15h2M8.5 7h4M8.5 11h3M8.5 15h2" stroke="#3a7ab8" stroke-width="1.8"/><circle cx="20" cy="12.5" r="6.8" fill="#d5ebf8" stroke="#7ab0d8" stroke-width="2"/><path d="M14.5 18.5 l-5.8 8.5" stroke="#e3a035" stroke-width="3" stroke-linecap="round"/></svg></div>
<div class="cell" style="left:484px;top:693.6px;line-height:28px;letter-spacing:0.0px">06/06 15:07:06</div>
<div class="cell" style="left:657px;top:693.6px;line-height:28px;letter-spacing:-0.3px">end</div>
<div class="cell" style="left:839px;top:693.6px;line-height:28px;letter-spacing:-0.65px">Cloudflare_L3_Zone</div>
<div class="cell" style="left:1053px;top:693.6px;line-height:28px;letter-spacing:-0.65px">Cloudflare_L3_Zone</div>
<div class="cell" style="left:1250px;top:693.6px;line-height:28px;letter-spacing:-0.43px">172.64.240.253</div>
<div class="cell" style="left:1441px;top:693.6px;line-height:28px;letter-spacing:-0.28px">172.71.181.76</div>
<div class="cell" style="left:1632px;top:693.6px;line-height:28px;letter-spacing:0px">0</div>
<div class="cell" style="left:1713px;top:693.6px;line-height:28px;letter-spacing:-0.57px">icmp</div>
<div class="cell" style="left:1894px;top:693.6px;line-height:28px;letter-spacing:0px">a</div>
<div class="abs" style="left:384px;top:739.9px"><svg width="30" height="30" viewBox="0 0 30 30"><path d="M1.5 2.5 h13 l4 4 v14.5 h-17z" fill="#eaf4fc" stroke="#3a8ad0" stroke-width="2.2"/><path d="M4.5 7h2M4.5 11h2M4.5 15h2M8.5 7h4M8.5 11h3M8.5 15h2" stroke="#3a7ab8" stroke-width="1.8"/><circle cx="20" cy="12.5" r="6.8" fill="#d5ebf8" stroke="#7ab0d8" stroke-width="2"/><path d="M14.5 18.5 l-5.8 8.5" stroke="#e3a035" stroke-width="3" stroke-linecap="round"/></svg></div>
<div class="cell" style="left:484px;top:737.2px;line-height:28px;letter-spacing:0.0px">06/06 15:07:06</div>
<div class="cell" style="left:657px;top:737.2px;line-height:28px;letter-spacing:-0.3px">end</div>
<div class="cell" style="left:839px;top:737.2px;line-height:28px;letter-spacing:-0.65px">Cloudflare_L3_Zone</div>
<div class="cell" style="left:1053px;top:737.2px;line-height:28px;letter-spacing:-0.65px">Cloudflare_L3_Zone</div>
<div class="cell" style="left:1250px;top:737.2px;line-height:28px;letter-spacing:-0.43px">172.64.240.254</div>
<div class="cell" style="left:1441px;top:737.2px;line-height:28px;letter-spacing:-0.28px">172.71.181.76</div>
<div class="cell" style="left:1632px;top:737.2px;line-height:28px;letter-spacing:0px">0</div>
<div class="cell" style="left:1713px;top:737.2px;line-height:28px;letter-spacing:-0.57px">icmp</div>
<div class="cell" style="left:1894px;top:737.2px;line-height:28px;letter-spacing:0px">a</div>
<div class="abs" style="left:384px;top:783.5px"><svg width="30" height="30" viewBox="0 0 30 30"><path d="M1.5 2.5 h13 l4 4 v14.5 h-17z" fill="#eaf4fc" stroke="#3a8ad0" stroke-width="2.2"/><path d="M4.5 7h2M4.5 11h2M4.5 15h2M8.5 7h4M8.5 11h3M8.5 15h2" stroke="#3a7ab8" stroke-width="1.8"/><circle cx="20" cy="12.5" r="6.8" fill="#d5ebf8" stroke="#7ab0d8" stroke-width="2"/><path d="M14.5 18.5 l-5.8 8.5" stroke="#e3a035" stroke-width="3" stroke-linecap="round"/></svg></div>
<div class="cell" style="left:484px;top:780.8px;line-height:28px;letter-spacing:0.0px">06/06 15:07:06</div>
<div class="cell" style="left:657px;top:780.8px;line-height:28px;letter-spacing:-0.3px">end</div>
<div class="cell" style="left:839px;top:780.8px;line-height:28px;letter-spacing:-0.65px">Cloudflare_L3_Zone</div>
<div class="cell" style="left:1053px;top:780.8px;line-height:28px;letter-spacing:-0.65px">Cloudflare_L3_Zone</div>
<div class="cell" style="left:1250px;top:780.8px;line-height:28px;letter-spacing:-0.43px">172.64.240.254</div>
<div class="cell" style="left:1441px;top:780.8px;line-height:28px;letter-spacing:-0.28px">172.71.253.23</div>
<div class="cell" style="left:1632px;top:780.8px;line-height:28px;letter-spacing:0px">0</div>
<div class="cell" style="left:1713px;top:780.8px;line-height:28px;letter-spacing:-0.57px">icmp</div>
<div class="cell" style="left:1894px;top:780.8px;line-height:28px;letter-spacing:0px">a</div>
<div class="abs" style="left:384px;top:827.1px"><svg width="30" height="30" viewBox="0 0 30 30"><path d="M1.5 2.5 h13 l4 4 v14.5 h-17z" fill="#eaf4fc" stroke="#3a8ad0" stroke-width="2.2"/><path d="M4.5 7h2M4.5 11h2M4.5 15h2M8.5 7h4M8.5 11h3M8.5 15h2" stroke="#3a7ab8" stroke-width="1.8"/><circle cx="20" cy="12.5" r="6.8" fill="#d5ebf8" stroke="#7ab0d8" stroke-width="2"/><path d="M14.5 18.5 l-5.8 8.5" stroke="#e3a035" stroke-width="3" stroke-linecap="round"/></svg></div>
<div class="cell" style="left:484px;top:824.4px;line-height:28px;letter-spacing:0.0px">06/06 15:07:06</div>
<div class="cell" style="left:657px;top:824.4px;line-height:28px;letter-spacing:-0.3px">end</div>
<div class="cell" style="left:839px;top:824.4px;line-height:28px;letter-spacing:-0.65px">Cloudflare_L3_Zone</div>
<div class="cell" style="left:1053px;top:824.4px;line-height:28px;letter-spacing:-0.65px">Cloudflare_L3_Zone</div>
<div class="cell" style="left:1250px;top:824.4px;line-height:28px;letter-spacing:-0.43px">172.64.240.253</div>
<div class="cell" style="left:1441px;top:824.4px;line-height:28px;letter-spacing:-0.28px">172.71.253.23</div>
<div class="cell" style="left:1632px;top:824.4px;line-height:28px;letter-spacing:0px">0</div>
<div class="cell" style="left:1713px;top:824.4px;line-height:28px;letter-spacing:-0.57px">icmp</div>
<div class="cell" style="left:1894px;top:824.4px;line-height:28px;letter-spacing:0px">a</div>
<div class="abs" style="left:384px;top:870.7px"><svg width="30" height="30" viewBox="0 0 30 30"><path d="M1.5 2.5 h13 l4 4 v14.5 h-17z" fill="#eaf4fc" stroke="#3a8ad0" stroke-width="2.2"/><path d="M4.5 7h2M4.5 11h2M4.5 15h2M8.5 7h4M8.5 11h3M8.5 15h2" stroke="#3a7ab8" stroke-width="1.8"/><circle cx="20" cy="12.5" r="6.8" fill="#d5ebf8" stroke="#7ab0d8" stroke-width="2"/><path d="M14.5 18.5 l-5.8 8.5" stroke="#e3a035" stroke-width="3" stroke-linecap="round"/></svg></div>
<div class="cell" style="left:484px;top:868.0px;line-height:28px;letter-spacing:0.0px">06/06 15:07:05</div>
<div class="cell" style="left:657px;top:868.0px;line-height:28px;letter-spacing:-0.3px">end</div>
<div class="cell" style="left:839px;top:868.0px;line-height:28px;letter-spacing:-0.65px">Cloudflare_L3_Zone</div>
<div class="cell" style="left:1053px;top:868.0px;line-height:28px;letter-spacing:-0.65px">Cloudflare_L3_Zone</div>
<div class="cell" style="left:1250px;top:868.0px;line-height:28px;letter-spacing:-0.43px">172.64.240.253</div>
<div class="cell" style="left:1441px;top:868.0px;line-height:28px;letter-spacing:-0.28px">108.162.217.182</div>
<div class="cell" style="left:1632px;top:868.0px;line-height:28px;letter-spacing:0px">0</div>
<div class="cell" style="left:1713px;top:868.0px;line-height:28px;letter-spacing:-0.57px">icmp</div>
<div class="cell" style="left:1894px;top:868.0px;line-height:28px;letter-spacing:0px">a</div>
<div class="abs" style="left:384px;top:914.3px"><svg width="30" height="30" viewBox="0 0 30 30"><path d="M1.5 2.5 h13 l4 4 v14.5 h-17z" fill="#eaf4fc" stroke="#3a8ad0" stroke-width="2.2"/><path d="M4.5 7h2M4.5 11h2M4.5 15h2M8.5 7h4M8.5 11h3M8.5 15h2" stroke="#3a7ab8" stroke-width="1.8"/><circle cx="20" cy="12.5" r="6.8" fill="#d5ebf8" stroke="#7ab0d8" stroke-width="2"/><path d="M14.5 18.5 l-5.8 8.5" stroke="#e3a035" stroke-width="3" stroke-linecap="round"/></svg></div>
<div class="cell" style="left:484px;top:911.6px;line-height:28px;letter-spacing:0.0px">06/06 15:07:05</div>
<div class="cell" style="left:657px;top:911.6px;line-height:28px;letter-spacing:-0.3px">end</div>
<div class="cell" style="left:839px;top:911.6px;line-height:28px;letter-spacing:-0.65px">Cloudflare_L3_Zone</div>
<div class="cell" style="left:1053px;top:911.6px;line-height:28px;letter-spacing:-0.65px">Cloudflare_L3_Zone</div>
<div class="cell" style="left:1250px;top:911.6px;line-height:28px;letter-spacing:-0.43px">172.64.240.254</div>
<div class="cell" style="left:1441px;top:911.6px;line-height:28px;letter-spacing:-0.28px">108.162.217.182</div>
<div class="cell" style="left:1632px;top:911.6px;line-height:28px;letter-spacing:0px">0</div>
<div class="cell" style="left:1713px;top:911.6px;line-height:28px;letter-spacing:-0.57px">icmp</div>
<div class="cell" style="left:1894px;top:911.6px;line-height:28px;letter-spacing:0px">a</div>
<div class="abs" style="left:384px;top:957.9px"><svg width="30" height="30" viewBox="0 0 30 30"><path d="M1.5 2.5 h13 l4 4 v14.5 h-17z" fill="#eaf4fc" stroke="#3a8ad0" stroke-width="2.2"/><path d="M4.5 7h2M4.5 11h2M4.5 15h2M8.5 7h4M8.5 11h3M8.5 15h2" stroke="#3a7ab8" stroke-width="1.8"/><circle cx="20" cy="12.5" r="6.8" fill="#d5ebf8" stroke="#7ab0d8" stroke-width="2"/><path d="M14.5 18.5 l-5.8 8.5" stroke="#e3a035" stroke-width="3" stroke-linecap="round"/></svg></div>
<div class="cell" style="left:484px;top:955.2px;line-height:28px;letter-spacing:0.0px">06/06 15:07:04</div>
<div class="cell" style="left:657px;top:955.2px;line-height:28px;letter-spacing:-0.3px">end</div>
<div class="cell" style="left:839px;top:955.2px;line-height:28px;letter-spacing:-0.65px">Cloudflare_L3_Zone</div>
<div class="cell" style="left:1053px;top:955.2px;line-height:28px;letter-spacing:-0.65px">Cloudflare_L3_Zone</div>
<div class="cell" style="left:1250px;top:955.2px;line-height:28px;letter-spacing:-0.43px">172.64.240.253</div>
<div class="cell" style="left:1441px;top:955.2px;line-height:28px;letter-spacing:-0.28px">172.71.153.150</div>
<div class="cell" style="left:1632px;top:955.2px;line-height:28px;letter-spacing:0px">0</div>
<div class="cell" style="left:1713px;top:955.2px;line-height:28px;letter-spacing:-0.57px">icmp</div>
<div class="cell" style="left:1894px;top:955.2px;line-height:28px;letter-spacing:0px">a</div>
<div class="abs" style="left:384px;top:1001.5px"><svg width="30" height="30" viewBox="0 0 30 30"><path d="M1.5 2.5 h13 l4 4 v14.5 h-17z" fill="#eaf4fc" stroke="#3a8ad0" stroke-width="2.2"/><path d="M4.5 7h2M4.5 11h2M4.5 15h2M8.5 7h4M8.5 11h3M8.5 15h2" stroke="#3a7ab8" stroke-width="1.8"/><circle cx="20" cy="12.5" r="6.8" fill="#d5ebf8" stroke="#7ab0d8" stroke-width="2"/><path d="M14.5 18.5 l-5.8 8.5" stroke="#e3a035" stroke-width="3" stroke-linecap="round"/></svg></div>
<div class="cell" style="left:484px;top:998.8px;line-height:28px;letter-spacing:0.0px">06/06 15:07:04</div>
<div class="cell" style="left:657px;top:998.8px;line-height:28px;letter-spacing:-0.3px">end</div>
<div class="cell" style="left:839px;top:998.8px;line-height:28px;letter-spacing:-0.65px">Cloudflare_L3_Zone</div>
<div class="cell" style="left:1053px;top:998.8px;line-height:28px;letter-spacing:-0.65px">Cloudflare_L3_Zone</div>
<div class="cell" style="left:1250px;top:998.8px;line-height:28px;letter-spacing:-0.43px">172.64.240.253</div>
<div class="cell" style="left:1441px;top:998.8px;line-height:28px;letter-spacing:-0.28px">172.70.177.42</div>
<div class="cell" style="left:1632px;top:998.8px;line-height:28px;letter-spacing:0px">0</div>
<div class="cell" style="left:1713px;top:998.8px;line-height:28px;letter-spacing:-0.57px">icmp</div>
<div class="cell" style="left:1894px;top:998.8px;line-height:28px;letter-spacing:0px">a</div>
<div class="abs" style="left:384px;top:1045.1px"><svg width="30" height="30" viewBox="0 0 30 30"><path d="M1.5 2.5 h13 l4 4 v14.5 h-17z" fill="#eaf4fc" stroke="#3a8ad0" stroke-width="2.2"/><path d="M4.5 7h2M4.5 11h2M4.5 15h2M8.5 7h4M8.5 11h3M8.5 15h2" stroke="#3a7ab8" stroke-width="1.8"/><circle cx="20" cy="12.5" r="6.8" fill="#d5ebf8" stroke="#7ab0d8" stroke-width="2"/><path d="M14.5 18.5 l-5.8 8.5" stroke="#e3a035" stroke-width="3" stroke-linecap="round"/></svg></div>
<div class="cell" style="left:484px;top:1042.4px;line-height:28px;letter-spacing:0.0px">06/06 15:07:04</div>
<div class="cell" style="left:657px;top:1042.4px;line-height:28px;letter-spacing:-0.3px">end</div>
<div class="cell" style="left:839px;top:1042.4px;line-height:28px;letter-spacing:-0.65px">Cloudflare_L3_Zone</div>
<div class="cell" style="left:1053px;top:1042.4px;line-height:28px;letter-spacing:-0.65px">Cloudflare_L3_Zone</div>
<div class="cell" style="left:1250px;top:1042.4px;line-height:28px;letter-spacing:-0.43px">172.64.240.253</div>
<div class="cell" style="left:1441px;top:1042.4px;line-height:28px;letter-spacing:-0.28px">172.71.204.96</div>
<div class="cell" style="left:1632px;top:1042.4px;line-height:28px;letter-spacing:0px">0</div>
<div class="cell" style="left:1713px;top:1042.4px;line-height:28px;letter-spacing:-0.57px">icmp</div>
<div class="cell" style="left:1894px;top:1042.4px;line-height:28px;letter-spacing:0px">a</div>
<div class="abs" style="left:384px;top:1088.7px"><svg width="30" height="30" viewBox="0 0 30 30"><path d="M1.5 2.5 h13 l4 4 v14.5 h-17z" fill="#eaf4fc" stroke="#3a8ad0" stroke-width="2.2"/><path d="M4.5 7h2M4.5 11h2M4.5 15h2M8.5 7h4M8.5 11h3M8.5 15h2" stroke="#3a7ab8" stroke-width="1.8"/><circle cx="20" cy="12.5" r="6.8" fill="#d5ebf8" stroke="#7ab0d8" stroke-width="2"/><path d="M14.5 18.5 l-5.8 8.5" stroke="#e3a035" stroke-width="3" stroke-linecap="round"/></svg></div>
<div class="cell" style="left:484px;top:1086.0px;line-height:28px;letter-spacing:0.0px">06/06 15:07:04</div>
<div class="cell" style="left:657px;top:1086.0px;line-height:28px;letter-spacing:-0.3px">end</div>
<div class="cell" style="left:839px;top:1086.0px;line-height:28px;letter-spacing:-0.65px">Cloudflare_L3_Zone</div>
<div class="cell" style="left:1053px;top:1086.0px;line-height:28px;letter-spacing:-0.65px">Cloudflare_L3_Zone</div>
<div class="cell" style="left:1250px;top:1086.0px;line-height:28px;letter-spacing:-0.43px">172.64.240.254</div>
<div class="cell" style="left:1441px;top:1086.0px;line-height:28px;letter-spacing:-0.28px">172.71.204.96</div>
<div class="cell" style="left:1632px;top:1086.0px;line-height:28px;letter-spacing:0px">0</div>
<div class="cell" style="left:1713px;top:1086.0px;line-height:28px;letter-spacing:-0.57px">icmp</div>
<div class="cell" style="left:1894px;top:1086.0px;line-height:28px;letter-spacing:0px">a</div>
<div class="abs" style="left:389px;top:1127px;width:643px;height:4px;background:#85898d;border-radius:2px"></div>
<div class="abs" style="left:368px;top:1136px;width:1536px;height:42px;background:#46535b"></div>
<svg class="abs" style="left:381px;top:1148px" width="60" height="22"><path d="M1 3v16" stroke="#6b7880" stroke-width="2"/><path d="M14 2 v18 l-11-9z M25 2 v18 l-11-9z" fill="#7a868e"/><path d="M55 3 v16 l-11-8z" fill="#7a868e"/></svg>
<div class="abs" style="left:457px;top:1145px;width:2px;height:29px;background:#9aa4aa"></div>
<div class="abs" style="left:471.0px;top:1148.5px;font-size:21px;line-height:28px;color:#e0a63a;white-space:nowrap"><span class="cond" style="transform:scaleX(0.88)">1</span></div>
<div class="abs" style="left:486.4px;top:1148.5px;font-size:21px;line-height:28px;color:#a6c43c;white-space:nowrap"><span class="cond" style="transform:scaleX(0.88)">2</span></div>
<div class="abs" style="left:501.9px;top:1148.5px;font-size:21px;line-height:28px;color:#a6c43c;white-space:nowrap"><span class="cond" style="transform:scaleX(0.88)">3</span></div>
<div class="abs" style="left:517.4px;top:1148.5px;font-size:21px;line-height:28px;color:#a6c43c;white-space:nowrap"><span class="cond" style="transform:scaleX(0.88)">4</span></div>
<div class="abs" style="left:532.8px;top:1148.5px;font-size:21px;line-height:28px;color:#a6c43c;white-space:nowrap"><span class="cond" style="transform:scaleX(0.88)">5</span></div>
<div class="abs" style="left:548.2px;top:1148.5px;font-size:21px;line-height:28px;color:#a6c43c;white-space:nowrap"><span class="cond" style="transform:scaleX(0.88)">6</span></div>
<div class="abs" style="left:563.7px;top:1148.5px;font-size:21px;line-height:28px;color:#a6c43c;white-space:nowrap"><span class="cond" style="transform:scaleX(0.88)">7</span></div>
<div class="abs" style="left:579.1px;top:1148.5px;font-size:21px;line-height:28px;color:#a6c43c;white-space:nowrap"><span class="cond" style="transform:scaleX(0.88)">8</span></div>
<div class="abs" style="left:594.6px;top:1148.5px;font-size:21px;line-height:28px;color:#a6c43c;white-space:nowrap"><span class="cond" style="transform:scaleX(0.88)">9</span></div>
<div class="abs" style="left:610.0px;top:1148.5px;font-size:21px;line-height:28px;color:#a6c43c;white-space:nowrap"><span class="cond" style="transform:scaleX(0.88)">10</span></div>
<div class="abs" style="left:646px;top:1145px;width:2px;height:29px;background:#9aa4aa"></div>
<svg class="abs" style="left:668px;top:1148px" width="62" height="22"><path d="M2 5 v13 l10-6.5z" fill="#f0f0e0"/><path d="M39 5 v13 l10-6.5z M49.5 5 v13 l10-6.5z" fill="#f0f0e0"/></svg>
<div class="abs" style="left:737px;top:1145px;width:2px;height:29px;background:#9aa4aa"></div>
<div class="abs" style="left:748px;top:1146px;width:25px;height:25px;background:#fff;border:1px solid #c8ccd0;box-shadow:0 0 1px #222"></div>
<div class="ft" style="left:784px;top:1148px"><span class="cond" style="transform:scaleX(0.79)">Resolve hostname</span></div>
<div class="abs" style="left:954px;top:1146px;width:25px;height:25px;background:#fff;border:1px solid #c8ccd0"></div>
<svg class="abs" style="left:954px;top:1146px" width="26" height="26"><path d="M4 13 l6 7 l12-16" fill="none" stroke="#2a6a9a" stroke-width="4"/></svg>
<div class="ft" style="left:991px;top:1148px"><span class="cond" style="transform:scaleX(0.80)">Highlight Policy Actions</span></div>
<div class="abs" style="left:1187px;top:1145px;width:2px;height:28px;background:#9aa4aa"></div>
<div class="ft" style="left:1205px;top:1146px;font-size:23.5px"><span class="cond" style="transform:scaleX(0.755)">Test Policy Match</span></div>
<svg class="abs" style="left:1351px;top:1157px" width="13" height="7"><path d="M0 0 h12 l-6 6z" fill="#f0f0e0"/></svg>
<div class="ft" style="left:1435px;top:1148px"><span class="cond" style="transform:scaleX(0.80)">Displaying logs 1 - 30</span></div>
<div class="abs" style="left:1614px;top:1143px;width:2px;height:30px;background:#9aa4aa"></div>
<div class="abs" style="left:1623px;top:1141px;width:54px;height:37px;background:#fff"></div>
<div class="abs" style="left:1629px;top:1146px;font-size:20px;line-height:28px;color:#111">30</div>
<div class="abs" style="left:1677px;top:1141px;width:36px;height:37px;background:#dcdcdc;border:1px solid #bfc4c8"></div>
<svg class="abs" style="left:1685px;top:1155px" width="20" height="11"><path d="M0 0 h19 l-9.5 10z" fill="#8a98a4"/></svg>
<div class="ft" style="left:1717px;top:1148px"><span class="cond" style="transform:scaleX(0.80)">per page</span></div>
<div class="abs" style="left:1797px;top:1143px;width:2px;height:30px;background:#9aa4aa"></div>
<div class="abs" style="left:1805px;top:1141px;width:73px;height:37px;background:#fff"></div>
<div class="abs" style="left:1812px;top:1146px;font-size:20px;line-height:28px;color:#111">DESC</div>
<div class="abs" style="left:1877px;top:1141px;width:36px;height:37px;background:#dcdcdc;border:1px solid #bfc4c8"></div>
<svg class="abs" style="left:1885px;top:1155px" width="20" height="11"><path d="M0 0 h19 l-9.5 10z" fill="#8a98a4"/></svg>
<div class="abs" style="left:368px;top:665px;width:8px;height:54px;background:#eceeef;border-radius:0 3px 3px 0"></div>
<div class="abs" style="left:368px;top:665px;width:3px;height:54px;background:#b8bcc0"></div>
<svg class="abs" style="left:369px;top:689px" width="7" height="11"><path d="M6 0 v10 l-6-5z" fill="#a8adb2"/></svg>
<div class="redbox" style="left:364px;top:336px;width:64px;height:42px"></div>
<div class="redbox" style="left:826px;top:334.5px;width:410px;height:45px"></div>
<div class="redbox" style="left:1238px;top:334.5px;width:163px;height:46px"></div>
<div class="redbox" style="left:1238px;top:420px;width:163px;height:45.5px"></div>
<svg class="abs" style="left:0;top:0;filter:drop-shadow(0 1.5px 1.5px rgba(0,0,0,.35))" width="1904" height="1178">
<path d="M461.4 388.3 L569.4 482.5 A3.4 3.4 0 0 1 565 487.7 L454.6 395.7 Z" fill="#f4403f"/>
<path d="M440.2 375.9 L466 382.2 L450.4 400.2 Z" fill="#f4403f" stroke="#f4403f" stroke-width="0.8" stroke-linejoin="round"/>
</svg>
</body></html>
